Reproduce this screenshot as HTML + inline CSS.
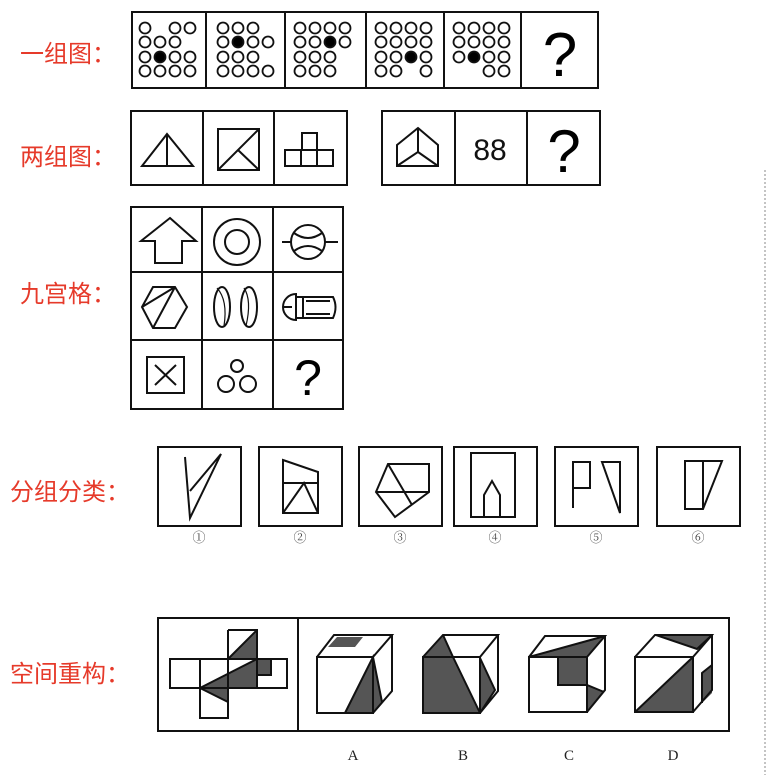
<!DOCTYPE html>
<html><head><meta charset="utf-8"><style>
html,body{margin:0;padding:0;background:#fff;}
svg{display:block}
.l{font-family:"Liberation Sans","Noto Sans CJK SC",sans-serif;font-size:24px;fill:#e63a2a;}
.q{font-family:"Liberation Sans","DejaVu Sans",sans-serif;fill:#000;}
.n{font-family:"Liberation Serif","Noto Serif CJK SC",serif;font-size:13px;fill:#444;}
</style></head><body>
<svg width="768" height="775" viewBox="0 0 768 775" xmlns="http://www.w3.org/2000/svg">
<line x1="765" y1="170" x2="765" y2="775" stroke="#888" stroke-width="1" stroke-dasharray="2,2"/>
<text class="l" x="20" y="62">一组图：</text>
<text class="l" x="20" y="165">两组图：</text>
<text class="l" x="20" y="302">九宫格：</text>
<text class="l" x="10" y="500">分组分类：</text>
<text class="l" x="10" y="682">空间重构：</text>

<g fill="none" stroke="#111" stroke-width="2">
<rect x="132" y="12" width="466" height="76"/>
<line x1="206" y1="12" x2="206" y2="88"/><line x1="285" y1="12" x2="285" y2="88"/>
<line x1="366" y1="12" x2="366" y2="88"/><line x1="444" y1="12" x2="444" y2="88"/>
<line x1="521" y1="12" x2="521" y2="88"/>
</g>
<g fill="#fff" stroke="#111" stroke-width="1.8">
<circle cx="145" cy="28" r="5.5"/><circle cx="175" cy="28" r="5.5"/><circle cx="190" cy="28" r="5.5"/>
<circle cx="145" cy="42" r="5.5"/><circle cx="160" cy="42" r="5.5"/><circle cx="175" cy="42" r="5.5"/>
<circle cx="145" cy="57" r="5.5"/><circle cx="160" cy="57" r="5.5" fill="#000"/><circle cx="175" cy="57" r="5.5"/><circle cx="190" cy="57" r="5.5"/>
<circle cx="145" cy="71" r="5.5"/><circle cx="160" cy="71" r="5.5"/><circle cx="175" cy="71" r="5.5"/><circle cx="190" cy="71" r="5.5"/>
<circle cx="223" cy="28" r="5.5"/><circle cx="238" cy="28" r="5.5"/><circle cx="253" cy="28" r="5.5"/>
<circle cx="223" cy="42" r="5.5"/><circle cx="238" cy="42" r="5.5" fill="#000"/><circle cx="253" cy="42" r="5.5"/><circle cx="268" cy="42" r="5.5"/>
<circle cx="223" cy="57" r="5.5"/><circle cx="238" cy="57" r="5.5"/><circle cx="253" cy="57" r="5.5"/>
<circle cx="223" cy="71" r="5.5"/><circle cx="238" cy="71" r="5.5"/><circle cx="253" cy="71" r="5.5"/><circle cx="268" cy="71" r="5.5"/>
<circle cx="300" cy="28" r="5.5"/><circle cx="315" cy="28" r="5.5"/><circle cx="330" cy="28" r="5.5"/><circle cx="345" cy="28" r="5.5"/>
<circle cx="300" cy="42" r="5.5"/><circle cx="315" cy="42" r="5.5"/><circle cx="330" cy="42" r="5.5" fill="#000"/><circle cx="345" cy="42" r="5.5"/>
<circle cx="300" cy="57" r="5.5"/><circle cx="315" cy="57" r="5.5"/><circle cx="330" cy="57" r="5.5"/>
<circle cx="300" cy="71" r="5.5"/><circle cx="315" cy="71" r="5.5"/><circle cx="330" cy="71" r="5.5"/>
<circle cx="381" cy="28" r="5.5"/><circle cx="396" cy="28" r="5.5"/><circle cx="411" cy="28" r="5.5"/><circle cx="426" cy="28" r="5.5"/>
<circle cx="381" cy="42" r="5.5"/><circle cx="396" cy="42" r="5.5"/><circle cx="411" cy="42" r="5.5"/><circle cx="426" cy="42" r="5.5"/>
<circle cx="381" cy="57" r="5.5"/><circle cx="396" cy="57" r="5.5"/><circle cx="411" cy="57" r="5.5" fill="#000"/><circle cx="426" cy="57" r="5.5"/>
<circle cx="381" cy="71" r="5.5"/><circle cx="396" cy="71" r="5.5"/><circle cx="426" cy="71" r="5.5"/>
<circle cx="459" cy="28" r="5.5"/><circle cx="474" cy="28" r="5.5"/><circle cx="489" cy="28" r="5.5"/><circle cx="504" cy="28" r="5.5"/>
<circle cx="459" cy="42" r="5.5"/><circle cx="474" cy="42" r="5.5"/><circle cx="489" cy="42" r="5.5"/><circle cx="504" cy="42" r="5.5"/>
<circle cx="459" cy="57" r="5.5"/><circle cx="474" cy="57" r="5.5" fill="#000"/><circle cx="489" cy="57" r="5.5"/><circle cx="504" cy="57" r="5.5"/>
<circle cx="489" cy="71" r="5.5"/><circle cx="504" cy="71" r="5.5"/>
</g>
<text class="q" x="560" y="76" font-size="62" text-anchor="middle">?</text>

<g fill="none" stroke="#111" stroke-width="2">
<rect x="131" y="111" width="216" height="74"/>
<line x1="203" y1="111" x2="203" y2="185"/><line x1="274" y1="111" x2="274" y2="185"/>
<rect x="382" y="111" width="218" height="74"/>
<line x1="455" y1="111" x2="455" y2="185"/><line x1="527" y1="111" x2="527" y2="185"/>
<path d="M142,166 L193,166 L167,134 Z M167,134 L167,166"/>
<rect x="218" y="129" width="41" height="41"/>
<path d="M259,129 L218,170 M238,150 L259,170"/>
<path d="M285,150 H333 V166 H285 Z M301,150 V166 M317,150 V166 M302,150 V133 H317 V150"/>
<path d="M397,145 L418,128 L438,145 L438,166 L397,166 Z M418,128 L418,152 L397,166 M418,152 L438,166"/>
</g>
<text x="490" y="160" text-anchor="middle" font-family="Liberation Sans,sans-serif" font-size="30" fill="#111">88</text>
<text class="q" x="564" y="172" font-size="60" text-anchor="middle">?</text>

<g fill="none" stroke="#111" stroke-width="2">
<rect x="131" y="207" width="212" height="202"/>
<line x1="202" y1="207" x2="202" y2="409"/><line x1="273" y1="207" x2="273" y2="409"/>
<line x1="131" y1="272" x2="343" y2="272"/><line x1="131" y1="340" x2="343" y2="340"/>
<path d="M170,218 L196,241 L182,241 L182,263 L155,263 L155,241 L141,241 Z"/>
<circle cx="237" cy="242" r="23"/><circle cx="237" cy="242" r="12"/>
<circle cx="308" cy="242" r="17"/><path d="M282,242 H291 M325,242 H338 M294,233 Q308,243 322,233 M294,251 Q308,241 322,251"/>
<path d="M142,307 L153,287 L175,287 L187,307 L175,328 L153,328 Z M175,287 L142,307 M175,287 L153,328"/>
<ellipse cx="222" cy="307" rx="8" ry="20"/><ellipse cx="249" cy="307" rx="8" ry="20"/>
<path d="M217,288 Q228,300 224,326 M244,288 Q252,300 246,326" stroke-width="1.2"/>
<path d="M296,294 A13,13 0 0 0 296,320 Z M284,307 H292"/>
<path d="M296,297 H333 Q338,307 333,318 H296 M303,297 V318 M306,301 H330 M306,314 H330"/>
<rect x="147" y="357" width="37" height="36"/><path d="M155,365 L176,385 M176,365 L155,385"/>
<circle cx="237" cy="366" r="6"/><circle cx="226" cy="384" r="8"/><circle cx="248" cy="384" r="8"/>
</g>
<text class="q" x="308" y="395" font-size="50" text-anchor="middle">?</text>

<g fill="none" stroke="#111" stroke-width="2">
<rect x="158" y="447" width="83" height="79"/>
<rect x="259" y="447" width="83" height="79"/>
<rect x="359" y="447" width="83" height="79"/>
<rect x="454" y="447" width="83" height="79"/>
<rect x="555" y="447" width="83" height="79"/>
<rect x="657" y="447" width="83" height="79"/>
<path d="M185,457 L190,518 L221,454 L190,491"/>
<path d="M283,460 L318,472 L318,513 L283,513 Z M283,483 H318 M283,513 L304,483 L318,513"/>
<path d="M388,464 H429 V492 L395,517 L376,492 Z M376,492 H429 M388,464 L412,505"/>
<path d="M471,453 H515 V517 H471 Z M484,517 V495 L492,481 L500,495 V517"/>
<path d="M573,508 V462 H590 V488 H573 M602,462 H620 V513 Z"/>
<path d="M685,461 H722 L703,509 H685 Z M703,461 V509"/>
</g>
<g text-anchor="middle">
<text class="n" x="199" y="542">①</text><text class="n" x="300" y="542">②</text>
<text class="n" x="400" y="542">③</text><text class="n" x="495" y="542">④</text>
<text class="n" x="596" y="542">⑤</text><text class="n" x="698" y="542">⑥</text>
</g>

<g fill="#555" stroke="none">
<polygon points="257,630 257,659 228,659"/>
<polygon points="200,688 257,659 257,688"/>
<polygon points="200,688 228,688 228,702"/>
<rect x="257" y="659" width="14" height="16"/>
<polygon points="345,713 373,657 373,713"/><polygon points="373,657 382,702 373,713"/>
<polygon points="337,637 363,637 355,647 328,647"/>
<polygon points="424,657 443,635 453,657"/><polygon points="423,657 453,657 480,713 423,713"/>
<polygon points="480,658 495,690 480,713"/>
<polygon points="529,657 605,636 587,657"/><rect x="558" y="657" width="29" height="28"/>
<polygon points="587,685 604,692 587,712"/>
<polygon points="656,635 712,635 697,649"/><polygon points="693,657 693,712 635,712"/>
<polygon points="702,673 712,665 712,693 702,703"/>
</g>
<g fill="none" stroke="#111" stroke-width="2">
<rect x="158" y="618" width="571" height="113"/><line x1="298" y1="618" x2="298" y2="731"/>
<path d="M228,630 H257 V688 M228,630 V718 H200 V659 M170,659 H287 V688 H170 Z M200,659 V688 M228,659 L257,630 M200,688 L257,659 M200,688 L228,702 M257,675 H271 V659"/>
<path d="M317,657 H373 V713 H317 Z M317,657 L334,635 H392 L373,657 M392,635 V691 L373,713 M345,713 L373,657 L382,702"/>
<path d="M423,657 H480 V713 H423 Z M423,657 L443,635 H498 L480,657 M498,635 V691 L480,713 M443,635 L453,657 L480,713 M480,658 L495,690 L480,713"/>
<path d="M529,657 H587 V712 H529 Z M529,657 L545,636 H605 L587,657 M605,636 V690 L587,712 M529,657 L605,636 M558,657 V685 H587 L604,692"/>
<path d="M635,657 H693 V712 H635 Z M635,657 L655,635 H712 L693,657 M712,635 V690 L693,712 M693,657 L635,712 M656,635 L697,649 L712,635 M702,703 V673 L712,665"/>
</g>
<g font-family="Liberation Serif,serif" font-size="15" fill="#222" text-anchor="middle">
<text x="353" y="760">A</text><text x="463" y="760">B</text><text x="569" y="760">C</text><text x="673" y="760">D</text>
</g>
</svg>
</body></html>
